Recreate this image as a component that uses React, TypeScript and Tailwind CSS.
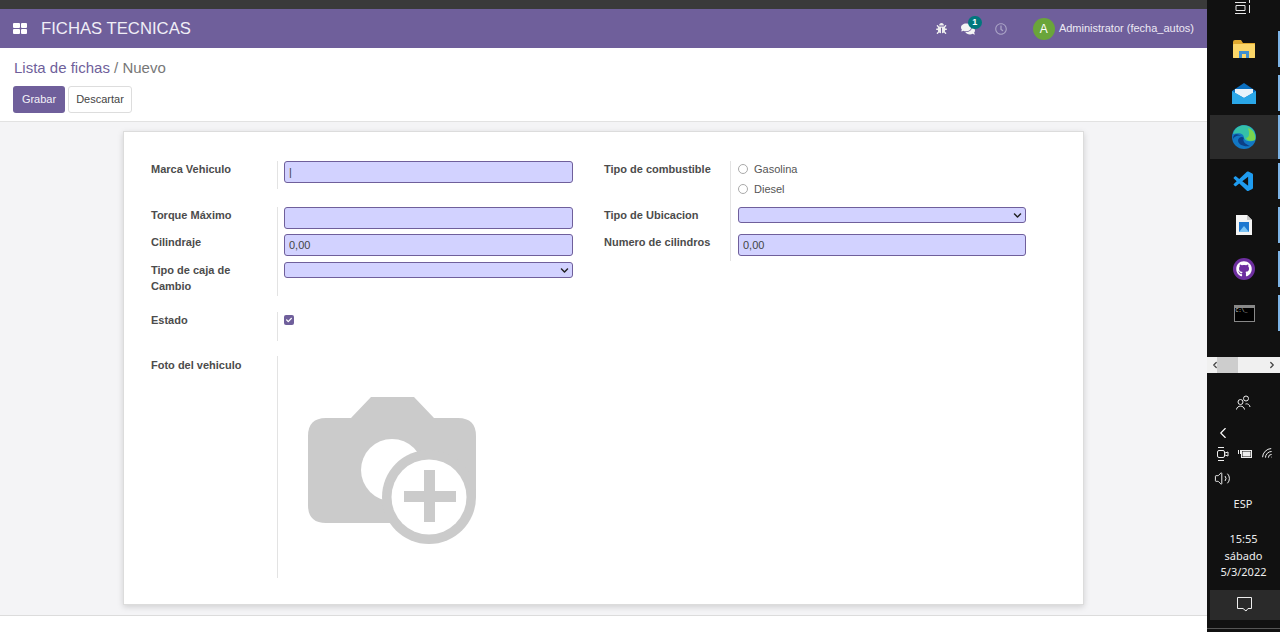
import type { ReactNode } from 'react'
import { FaBug, FaChevronDown, FaCheck, FaComments, FaGithub, FaRegClock } from 'react-icons/fa'
import { VscVscode } from 'react-icons/vsc'
import { ChevronLeft, ChevronRight, Volume2, Wifi } from 'lucide-react'

const inputCls =
  'block w-full h-[22px] px-1 bg-[#d2d2ff] border border-[#6f5f9b] rounded-[3px] text-[11px] text-[#444] outline-none'

function TextField({ value = '' }: { value?: string }) {
  return <input readOnly value={value} className={inputCls} />
}

function SelectField() {
  return (
    <div className="relative h-[16px]">
      <select className="block w-full h-[16px] appearance-none bg-[#d2d2ff] border border-[#6f5f9b] rounded-[3px] outline-none" />
      <FaChevronDown className="absolute right-[4px] top-[4px] w-[9px] h-[9px] text-[#222]" />
    </div>
  )
}

function Row({ label, h, children, pad = 'pl-[6px]' }: { label: ReactNode; h: string; children?: ReactNode; pad?: string }) {
  return (
    <div className={`flex ${h}`}>
      <div className="w-[126px] shrink-0 font-bold text-[11px] leading-[16px] text-[#4c4c4c] pr-4">{label}</div>
      <div className={`flex-1 border-l border-[#e3e3e3] ${pad}`}>{children}</div>
    </div>
  )
}

function Radio({ label }: { label: string }) {
  return (
    <div className="flex items-center gap-[6px] h-[20px] text-[11px] text-[#555]">
      <span className="w-[10px] h-[10px] rounded-full border border-[#aaa] bg-white" />
      {label}
    </div>
  )
}

function CameraPlaceholder() {
  return (
    <svg width="240" height="180" viewBox="0 0 240 180" className="block">
      <path
        d="M101 17 L144 17 L164 38 L188 38 Q206 38 206 56 L206 117 L159 117 L159 143 L56 143 Q38 143 38 125 L38 56 Q38 38 56 38 L81 38 Z"
        fill="#cbcbcb"
      />
      <circle cx="122" cy="90" r="31" fill="#fff" />
      <circle cx="159" cy="117" r="47" fill="#cbcbcb" />
      <circle cx="159" cy="117" r="37.5" fill="#fff" />
      <rect x="154" y="90" width="11" height="52" fill="#cbcbcb" />
      <rect x="134" y="111" width="52" height="11" fill="#cbcbcb" />
    </svg>
  )
}

function NavBar() {
  return (
    <div className="h-[39px] bg-[#6f5f9b] flex items-center pl-[13px] pr-[13px] text-white">
      <div className="grid grid-cols-2 gap-[1px] w-[14px] h-[11px]">
        <span className="bg-white rounded-[1px]" />
        <span className="bg-white rounded-[1px]" />
        <span className="bg-white rounded-[1px]" />
        <span className="bg-white rounded-[1px]" />
      </div>
      <span className="ml-[14px] text-[16.7px] text-[#f0eef6]">FICHAS TECNICAS</span>
      <div className="ml-auto flex items-center">
        <FaBug className="w-[11px] h-[11px] text-[#eee]" />
        <span className="relative ml-[14px]">
          <FaComments className="w-[14px] h-[14px] text-[#f4f4f4]" />
          <span className="absolute -top-[6px] left-[7px] w-[14px] h-[13px] rounded-full bg-[#00777d] text-[9px] leading-[13px] font-bold text-center">1</span>
        </span>
        <FaRegClock className="ml-[20px] w-[12px] h-[12px] text-[#aaa3c6]" />
        <span className="ml-[26px] w-[22px] h-[22px] rounded-full bg-[#6aa53a] text-[12px] leading-[22px] text-center">A</span>
        <span className="ml-[4px] text-[11px] text-[#ece9f4]">Administrator (fecha_autos)</span>
      </div>
    </div>
  )
}

function ControlPanel() {
  return (
    <div className="h-[74px] bg-white border-b border-[#e2e2e2] pl-[13px] pt-[10px]">
      <div className="text-[15px] leading-[20px] pl-[1px]">
        <span className="text-[#6f5f9b]">Lista de fichas</span>
        <span className="text-[#777]"> / Nuevo</span>
      </div>
      <div className="flex gap-[3px] mt-[8px]">
        <button className="h-[27px] w-[52px] bg-[#6f5f9b] text-[#f4f2f8] text-[11px] rounded-[3px]">Grabar</button>
        <button className="h-[27px] w-[64px] bg-white border border-[#ddd] text-[#444] text-[11px] rounded-[3px]">Descartar</button>
      </div>
    </div>
  )
}

function FormSheet() {
  return (
    <div className="ml-[123px] mt-[9px] w-[961px] h-[474px] bg-white border border-[#dcdcdc] shadow-[0_2px_6px_rgba(0,0,0,0.15)] pl-[27px] pt-[29px]">
      <div className="flex">
        <div className="w-[453px] shrink-0">
          <div className="w-[422px]">
            <Row label="Marca Vehiculo" h="h-[28px]">
              <TextField value="|" />
            </Row>
            <div className="mt-[18px]">
              <Row label="Torque Máximo" h="h-[27px]">
                <TextField />
              </Row>
              <Row label="Cilindraje" h="h-[28px]">
                <TextField value="0,00" />
              </Row>
              <Row label="Tipo de caja de Cambio" h="h-[34px]">
                <SelectField />
              </Row>
            </div>
            <div className="mt-[16px]">
              <Row label="Estado" h="h-[29px]">
                <span className="mt-[3px] flex items-center justify-center w-[10px] h-[10px] rounded-[2px] bg-[#6f5f9b]">
                  <FaCheck className="w-[6px] h-[6px] text-white" />
                </span>
              </Row>
            </div>
            <div className="mt-[15px]">
              <Row label={<span className="block pt-[1px]">Foto del vehiculo</span>} h="h-[222px]">
                <div className="-ml-[14px] mt-[24px]">
                  <CameraPlaceholder />
                </div>
              </Row>
            </div>
          </div>
        </div>
        <div className="w-[422px]">
          <Row label="Tipo de combustible" h="h-[46px]" pad="pl-[7px]">
            <div className="-mt-[2px]">
              <Radio label="Gasolina" />
              <Radio label="Diesel" />
            </div>
          </Row>
          <Row label="Tipo de Ubicacion" h="h-[27px]" pad="pl-[7px]">
            <SelectField />
          </Row>
          <Row label="Numero de cilindros" h="h-[27px]" pad="pl-[7px]">
            <TextField value="0,00" />
          </Row>
        </div>
      </div>
    </div>
  )
}

function FolderIcon() {
  return (
    <svg width="22" height="18" viewBox="0 0 22 18">
      <path d="M0 2 Q0 0 2 0 L8 0 L10 3 L22 3 L22 18 L0 18 Z" fill="#e0a92e" />
      <rect x="0" y="4" width="22" height="14" rx="1" fill="#fbd668" />
      <path d="M6 18 L6 11 L16 11 L16 18 L13 18 L13 14 L9 14 L9 18 Z" fill="#3f8fd0" />
    </svg>
  )
}

function MailIcon() {
  return (
    <svg width="24" height="22" viewBox="0 0 24 22" className="mt-[2px]">
      <path d="M12 0 L24 8 L24 21 L0 21 L0 8 Z" fill="#0a6fc0" />
      <path d="M3 6 L21 6 L21 10 L12 15 L3 10 Z" fill="#e8f3fb" />
      <path d="M0 8 L12 15 L24 8 L24 21 L0 21 Z" fill="#2aa7e8" />
    </svg>
  )
}

function EdgeIcon() {
  return (
    <svg width="24" height="24" viewBox="0 0 24 24" className="-mt-[1px]">
      <circle cx="12" cy="12" r="12" fill="#1277c4" />
      <path d="M1 9 C3 1 11 -1 16 1 C22 3 25 10 23 15 C20 17 13 17 12 13 C12 9 8 7 1 9 Z" fill="#35c1a8" />
      <path d="M16 3 C22 5 24 11 23 15 C20 16.5 15 16 14 13 C17 13 18 9 16 3 Z" fill="#7ad64e" />
      <path d="M12 13 C9 9 3 10 1 14 C1 8 6 8 12 13 Z" fill="#0c3f86" />
      <path d="M6 15 C6 20 12 22 18 21 C13 19 10 16 12 13 C10 11 7 12 6 15 Z" fill="#0c3f86" />
    </svg>
  )
}

function DocIcon() {
  return (
    <svg width="16" height="20" viewBox="0 0 16 20">
      <path d="M0 0 L11 0 L16 5 L16 20 L0 20 Z" fill="#f4f4f4" />
      <path d="M11 0 L16 5 L11 5 Z" fill="#c9c9c9" />
      <rect x="3" y="7" width="10" height="10" fill="#1e78d0" />
      <path d="M3 17 L8 11 L13 17 Z" fill="#7cc4f5" />
    </svg>
  )
}

function GithubIcon() {
  return (
    <span className="flex items-center justify-center w-[22px] h-[22px] rounded-full bg-[#6e2fa0]">
      <FaGithub className="w-[16px] h-[16px] text-white" />
    </span>
  )
}

function TerminalIcon() {
  return (
    <div className="w-[21px] h-[17px] bg-black border border-[#888] border-t-[3px]">
      <div className="text-[5px] leading-[7px] text-[#ddd] font-['Liberation_Mono',monospace] pl-[1px]">C:\_</div>
    </div>
  )
}

function TaskItem({ children, active = false }: { children: ReactNode; active?: boolean }) {
  return (
    <div className={`flex h-[44px] ml-[3px] items-center ${active ? 'bg-[#2b2b2b]' : ''}`}>
      <div className="w-[68px] flex justify-center">{children}</div>
      <div className={`w-[2px] bg-[#7db4e6] ${active ? 'h-full' : 'h-[36px]'}`} />
    </div>
  )
}

function Taskbar() {
  return (
    <div className="w-[73px] h-[632px] shrink-0 bg-[#111] text-white flex flex-col font-['Noto_Sans',sans-serif]">
      <div className="h-[27px] flex justify-center">
        <svg width="16" height="14" viewBox="0 0 16 14" fill="none" stroke="#e8e8e8" className="-ml-[1px]">
          <path d="M0 2.5 H11 M1 5.5 H10 V10.5 H1 Z M0 13.5 H11 M14.5 0 V3 M14.5 5 V13" />
        </svg>
      </div>
      <TaskItem><FolderIcon /></TaskItem>
      <TaskItem><MailIcon /></TaskItem>
      <TaskItem active><EdgeIcon /></TaskItem>
      <TaskItem><VscVscode className="w-[24px] h-[24px] mt-[2px] text-[#1f9cf0]" /></TaskItem>
      <TaskItem><DocIcon /></TaskItem>
      <TaskItem><GithubIcon /></TaskItem>
      <TaskItem><TerminalIcon /></TaskItem>

      <div className="mt-[22px] h-[16px] bg-[#f0f0f0] flex items-center justify-between px-[3px] text-[#444]">
        <ChevronLeft className="w-[10px] h-[10px]" strokeWidth={3} />
        <div className="w-[21px] h-full bg-[#cdcdcd] -ml-[33px]" />
        <ChevronRight className="w-[10px] h-[10px]" strokeWidth={3} />
      </div>

      <div className="mt-[22px] h-[22px] flex justify-center">
        <svg width="16" height="15" viewBox="0 0 16 15" fill="none" stroke="#eee" strokeWidth="1" className="-ml-[1px]">
          <circle cx="11" cy="3.5" r="2.5" />
          <circle cx="5.5" cy="7" r="2.5" />
          <path d="M1.5 14.5 C2 10 9 10 9.5 14.5 M10.5 9 C12 8.5 14.5 9 15 12" />
        </svg>
      </div>
      <div className="mt-[6px] h-[20px] pl-[7px] flex items-center">
        <ChevronLeft className="w-[18px] h-[18px]" strokeWidth={1.5} />
      </div>
      <div className="h-[22px] pl-[10px] flex items-center">
        <svg width="12" height="16" viewBox="0 0 12 16" fill="none" stroke="#eee">
          <rect x="0.5" y="4.5" width="7" height="7" rx="1.5" />
          <path d="M8 7 L11 6 V10 L8 9 M1 1.5 H7 M1 14.5 H7" />
        </svg>
        <svg width="15" height="10" viewBox="0 0 15 10" className="ml-[9px]" fill="none" stroke="#eee">
          <rect x="3.5" y="1.5" width="10" height="7" />
          <rect x="5" y="3" width="7" height="4" fill="#eee" />
          <path d="M0.5 1 V5 M2.5 1 V5" />
        </svg>
        <Wifi className="ml-[8px] w-[14px] h-[14px] -rotate-45" strokeWidth={1.5} />
      </div>
      <div className="mt-[3px] h-[20px] pl-[7px] flex items-center">
        <Volume2 className="w-[17px] h-[17px]" strokeWidth={1.3} />
      </div>
      <div className="mt-[7px] h-[18px] text-center text-[11px] leading-[18px] text-[#eee] -ml-[1px]">ESP</div>
      <div className="mt-[18px] text-center text-[11px] leading-[16.5px] text-[#eee]">
        <div>15:55</div>
        <div>sábado</div>
        <div>5/3/2022</div>
      </div>
      <div className="mt-[9px] ml-[3px] h-[30px] bg-[#2a2a2a] flex items-center justify-center">
        <svg width="17" height="17" viewBox="0 0 17 17" fill="none" stroke="#eee" className="-ml-[2px]">
          <path d="M1.5 1.5 H15.5 V12.5 H12 L10 15 L7 12.5 H1.5 Z" />
        </svg>
      </div>
      <div className="mt-[8px] h-[1px] bg-[#555]" />
    </div>
  )
}

export default function App() {
  return (
    <div className="flex w-[1280px] h-[632px] overflow-hidden font-['Liberation_Sans',Arial,sans-serif]">
      <div className="w-[1207px] shrink-0 flex flex-col">
        <div className="h-[9px] bg-[#3a3a3a]" />
        <NavBar />
        <ControlPanel />
        <div className="h-[494px] bg-[#f4f4f6] border-b border-[#dcdcdc]">
          <FormSheet />
        </div>
        <div className="flex-1 bg-white" />
      </div>
      <Taskbar />
    </div>
  )
}
